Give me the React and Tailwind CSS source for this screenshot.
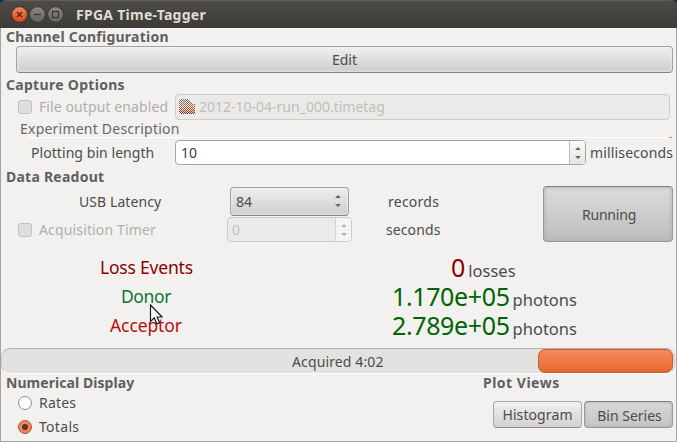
import React from "react";

function Heading({ className = "", tracking = "tracking-[0.24px]", children }) {
  return <h2 className={"h-[18px] whitespace-nowrap text-[14px] leading-[18px] font-bold text-[#5f5f5f] " + tracking + " " + className}>{children}</h2>;
}

function Steppers({ color = "#666666" }) {
  return (
    <svg width="8" height="14" viewBox="0 0 8 14" fill={color}>
      <path d="M1 4 4 1 7 4ZM1 10 4 13 7 10Z" />
    </svg>
  );
}

function DisabledCheck() {
  return <span className="h-[14px] w-[14px] shrink-0 rounded-[3px] border border-[#c3c1be] bg-[#e0dfde]" />;
}

function TitleBar() {
  return (
    <header className="flex h-[28px] shrink-0 items-center rounded-t-[6px] border-t border-[#5f5d57] bg-gradient-to-b from-[#4c4b46] to-[#3c3b37] pl-[11px]">
      <svg width="53" height="18" viewBox="0 0 53 18" fill="none">
        <defs>
          <linearGradient id="close" x1="0" y1="0" x2="0" y2="1">
            <stop offset="0" stopColor="#f58763" />
            <stop offset="1" stopColor="#dd4814" />
          </linearGradient>
          <linearGradient id="grey" x1="0" y1="0" x2="0" y2="1">
            <stop offset="0" stopColor="#8b8981" />
            <stop offset="1" stopColor="#66645e" />
          </linearGradient>
        </defs>
        <circle cx="8.5" cy="8.5" r="7.8" fill="url(#close)" stroke="#34332f" strokeWidth="0.8" />
        <circle cx="26.5" cy="8.5" r="7.8" fill="url(#grey)" stroke="#34332f" strokeWidth="0.8" />
        <circle cx="44.5" cy="8.5" r="7.8" fill="url(#grey)" stroke="#34332f" strokeWidth="0.8" />
        <path d="M6 6l5 5M11 6l-5 5" stroke="#4a2a1c" strokeWidth="1.4" />
        <path d="M23 8.5h7" stroke="#34332f" strokeWidth="1.2" />
        <rect x="41.5" y="5.5" width="6" height="6" stroke="#34332f" strokeWidth="1.2" />
      </svg>
      <h1 className="ml-[12px] text-[14px] leading-[20px] font-bold tracking-[0.27px] whitespace-nowrap text-[#dfdbd2]">FPGA Time-Tagger</h1>
    </header>
  );
}

const ICON_ROWS = [
  { y: 0, x: 1, w: 9, color: "#666666" },
  { y: 1, x: 0, w: 11, color: "#707070" },
  { y: 2, x: 0, w: 12, color: "#707070" },
  { y: 3, x: 0, w: 13, color: "#707070" },
  { y: 4, x: 0, w: 14, color: "#77706a" },
  { y: 5, x: 0, w: 16, color: "#8a6a58" },
  { y: 6, x: 0, w: 16, color: "#c07040" },
  { y: 7, x: 0, w: 16, color: "#c0652f" },
  { y: 8, x: 0, w: 16, color: "#b85828" },
  { y: 9, x: 0, w: 16, color: "#b04c22" },
  { y: 10, x: 0, w: 16, color: "#a5401c" },
  { y: 11, x: 0, w: 16, color: "#983416" },
  { y: 12, x: 0, w: 16, color: "#8a2810" },
  { y: 13, x: 1, w: 15, color: "#7c1c0a" },
  { y: 14, x: 1, w: 15, color: "#701806" },
];

/* Insensitive folder icon: every other pixel of the drawing is left out. */
function FileIcon() {
  return (
    <svg width="16" height="15" viewBox="0 0 16 15" shapeRendering="crispEdges">
      {ICON_ROWS.map((r) => {
        const start = r.x + ((r.x + r.y) % 2);
        return <path key={r.y} d={`M${start} ${r.y + 0.5}H${r.x + r.w}`} stroke={r.color} strokeDasharray="1 1" />;
      })}
    </svg>
  );
}

function Reading({ name, nameClass, value, valueClass, unit, padClass }) {
  return (
    <div className="flex h-[29px] items-center">
      <div className="w-[290px] shrink-0">
        <div className={"text-[17.5px] leading-[29px] whitespace-nowrap " + nameClass}>{name}</div>
      </div>
      <div className={"flex items-baseline pt-[2px] whitespace-nowrap " + padClass}>
        <span className={"text-[25px] leading-[29px] " + valueClass}>{value}</span>
        <span className="ml-[3px] text-[16.5px] leading-[29px] text-[#4c4c4c]">{unit}</span>
      </div>
    </div>
  );
}

export default function App() {
  return (
    <div className="h-[442px] w-[677px] overflow-hidden bg-[#0d2f4a] font-['Noto_Sans',sans-serif] text-[14px] text-[#4c4c4c]">
      <div className="flex h-full flex-col">
        <TitleBar />
        <main className="flex flex-1 flex-col border-x border-b border-[#a5a39e] bg-[#f2f1f0]">
          <Heading className="pl-[5px]">Channel Configuration</Heading>
          <button className="ml-[15px] h-[27px] w-[657px] shrink-0 rounded-[4px] border border-[#a2a2a2] border-b-[#858585] bg-gradient-to-b from-[#f0f0f0] to-[#cdcdcd] text-[14px] leading-[24px] shadow-[inset_0_0_3px_#f5f5f5]">Edit</button>
          <Heading className="mt-[3px] pl-[5px]" tracking="tracking-[0.3px]">Capture Options</Heading>
          <div className="-mt-px flex h-[27px] shrink-0 items-center pl-[17px] text-[#b0aeab]">
            <DisabledCheck />
            <span className="ml-[7px] w-[136px] tracking-[0.1px] whitespace-nowrap">File output enabled</span>
            <div className="flex h-[26px] w-[495px] items-center rounded-[4px] border border-[#cfccc8] bg-[#ebeae8] pl-[3px]">
              <FileIcon />
              <span className="ml-[4px] whitespace-nowrap text-[#bfbdba]">2012-10-04-run_000.timetag</span>
            </div>
          </div>
          <div className="h-[17px] shrink-0 pl-[19px] leading-[18px] tracking-[0.22px] whitespace-nowrap text-[#686868]">Experiment Description</div>
          <div className="ml-[27px] flex h-[1px] w-[644px] shrink-0 justify-end bg-white">
            <span className="w-[3px] bg-[#dc7b62]" />
          </div>
          <div className="mt-[2px] flex h-[25px] shrink-0 items-center pl-[30px]">
            <span className="w-[144px] tracking-[0.06px] whitespace-nowrap">Plotting bin length</span>
            <div className="flex h-[25px] w-[411px] overflow-hidden rounded-[4px] border border-[#a7a49f] bg-white">
              <span className="flex-1 pl-[5px] leading-[23px] text-[#3c3c3c]">10</span>
              <span className="flex w-[16px] items-center justify-center border-l border-[#bdbbb7] bg-gradient-to-b from-[#fafafa] to-[#e5e4e3]"><Steppers /></span>
            </div>
            <span className="ml-[4px] tracking-[0.15px] whitespace-nowrap">milliseconds</span>
          </div>
          <Heading className="mt-[3px] pl-[5px]">Data Readout</Heading>
          <div className="flex h-[56px] shrink-0">
            <div className="w-[542px]">
              <div className="flex h-[30px] items-center pl-[78px]">
                <span className="w-[151px] tracking-[0.08px] whitespace-nowrap">USB Latency</span>
                <div className="flex h-[29px] w-[119px] items-center justify-between rounded-[4px] border border-[#a2a2a2] border-b-[#858585] bg-gradient-to-b from-[#eeeeee] to-[#cecece] pr-[6px] pl-[5px] shadow-[inset_0_0_3px_#f5f5f5]">
                  <span>84</span>
                  <Steppers />
                </div>
                <span className="ml-[39px] tracking-[0.25px] whitespace-nowrap">records</span>
              </div>
              <div className="mt-[1px] flex h-[25px] items-center pl-[17px] text-[#b0aeab]">
                <DisabledCheck />
                <span className="ml-[7px] w-[188px] tracking-[0.15px] whitespace-nowrap">Acquisition Timer</span>
                <div className="flex h-[25px] w-[125px] overflow-hidden rounded-[4px] border border-[#cfccc8] bg-[#ebeae8]">
                  <span className="flex-1 pl-[4px] leading-[23px] text-[#c2c0be]">0</span>
                  <span className="flex w-[16px] items-center justify-center border-l border-[#d5d3d0] bg-[#f5f4f3]"><Steppers color="#b4b2b0" /></span>
                </div>
                <span className="ml-[34px] tracking-[0.1px] whitespace-nowrap text-[#4c4c4c]">seconds</span>
              </div>
            </div>
            <button className="h-[56px] w-[130px] rounded-[4px] border border-[#999999] border-t-[#7d7d7d] bg-gradient-to-b from-[#dcdcdc] to-[#bdbdbd] pl-[2px] tracking-[-0.2px] shadow-[inset_0_0_4px_#a8a8a8]">Running</button>
          </div>
          <section className="mt-[11px] h-[95px] shrink-0">
            <Reading name="Loss Events" nameClass="pl-[99px] tracking-[-0.2px] text-[#8b0000]" value="0" valueClass="text-[#8b0000]" unit="losses" padClass="pl-[160px]" />
            <Reading name="Donor" nameClass="pl-[120px] tracking-[-0.4px] text-[#0b7530]" value="1.170e+05" valueClass="tracking-[-0.37px] text-[#006400]" unit="photons" padClass="pl-[101px]" />
            <Reading name="Acceptor" nameClass="pl-[109px] tracking-[-0.1px] text-[#b80d0d]" value="2.789e+05" valueClass="tracking-[-0.37px] text-[#006400]" unit="photons" padClass="pl-[101px]" />
          </section>
          <div className="flex h-[26px] w-[674px] shrink-0 items-center rounded-[9px] border border-t-[#b3b0ac] border-r-[#cfcdca] border-b-white border-l-[#cfcdca] bg-[#e3e2e0]">
            <span className="w-[536px] pl-[290px] tracking-[0.12px] whitespace-nowrap">Acquired 4:02</span>
            <span className="h-[24px] w-[135px] shrink-0 rounded-[7px] border border-[#c65c35] bg-gradient-to-b from-[#fa8a5c] to-[#e4682f]" />
          </div>
          <section className="flex flex-1">
            <div className="w-[476px]">
              <Heading className="pl-[5px]" tracking="tracking-[0.06px]">Numerical Display</Heading>
              <label className="mt-px flex h-[20px] items-center pl-[17px]">
                <span className="h-[14px] w-[14px] rounded-full border border-[#8f8d8a] bg-white" />
                <span className="ml-[7px] pb-[2px] tracking-[0.2px]">Rates</span>
              </label>
              <label className="mt-[4px] flex h-[20px] items-center pl-[17px]">
                <span className="flex h-[14px] w-[14px] items-center justify-center rounded-full border border-[#b5532f] bg-[#f0855b]">
                  <span className="h-[6px] w-[6px] rounded-full bg-[#5a3425]" />
                </span>
                <span className="ml-[7px] pb-[2px] tracking-[0.3px]">Totals</span>
              </label>
            </div>
            <div>
              <Heading className="pl-[6px]" tracking="tracking-[0.5px]">Plot Views</Heading>
              <div className="mt-[9px] flex gap-[2px] pl-[16px]">
                <button className="h-[27px] w-[89px] rounded-[4px] border border-[#a8a8a8] border-b-[#8c8c8c] bg-gradient-to-b from-[#f0f0f0] to-[#d2d2d2] tracking-[0.1px] whitespace-nowrap">Histogram</button>
                <button className="h-[27px] w-[89px] rounded-[4px] border border-[#999999] border-t-[#7d7d7d] bg-gradient-to-b from-[#d8d8d8] to-[#c4c4c4] pt-[1px] pl-[2px] whitespace-nowrap shadow-[inset_0_0_3px_#aaaaaa]">Bin Series</button>
              </div>
            </div>
          </section>
        </main>
      </div>
      <svg className="absolute top-[304px] left-[149px]" width="14" height="22" viewBox="0 0 14 22">
        <path d="M1.5 1v16.5l3.8-3.6 2.5 6 2.8-1.2-2.5-5.7h5Z" fill="#ffffff" stroke="#1a1a1a" strokeWidth="1.2" />
      </svg>
    </div>
  );
}
